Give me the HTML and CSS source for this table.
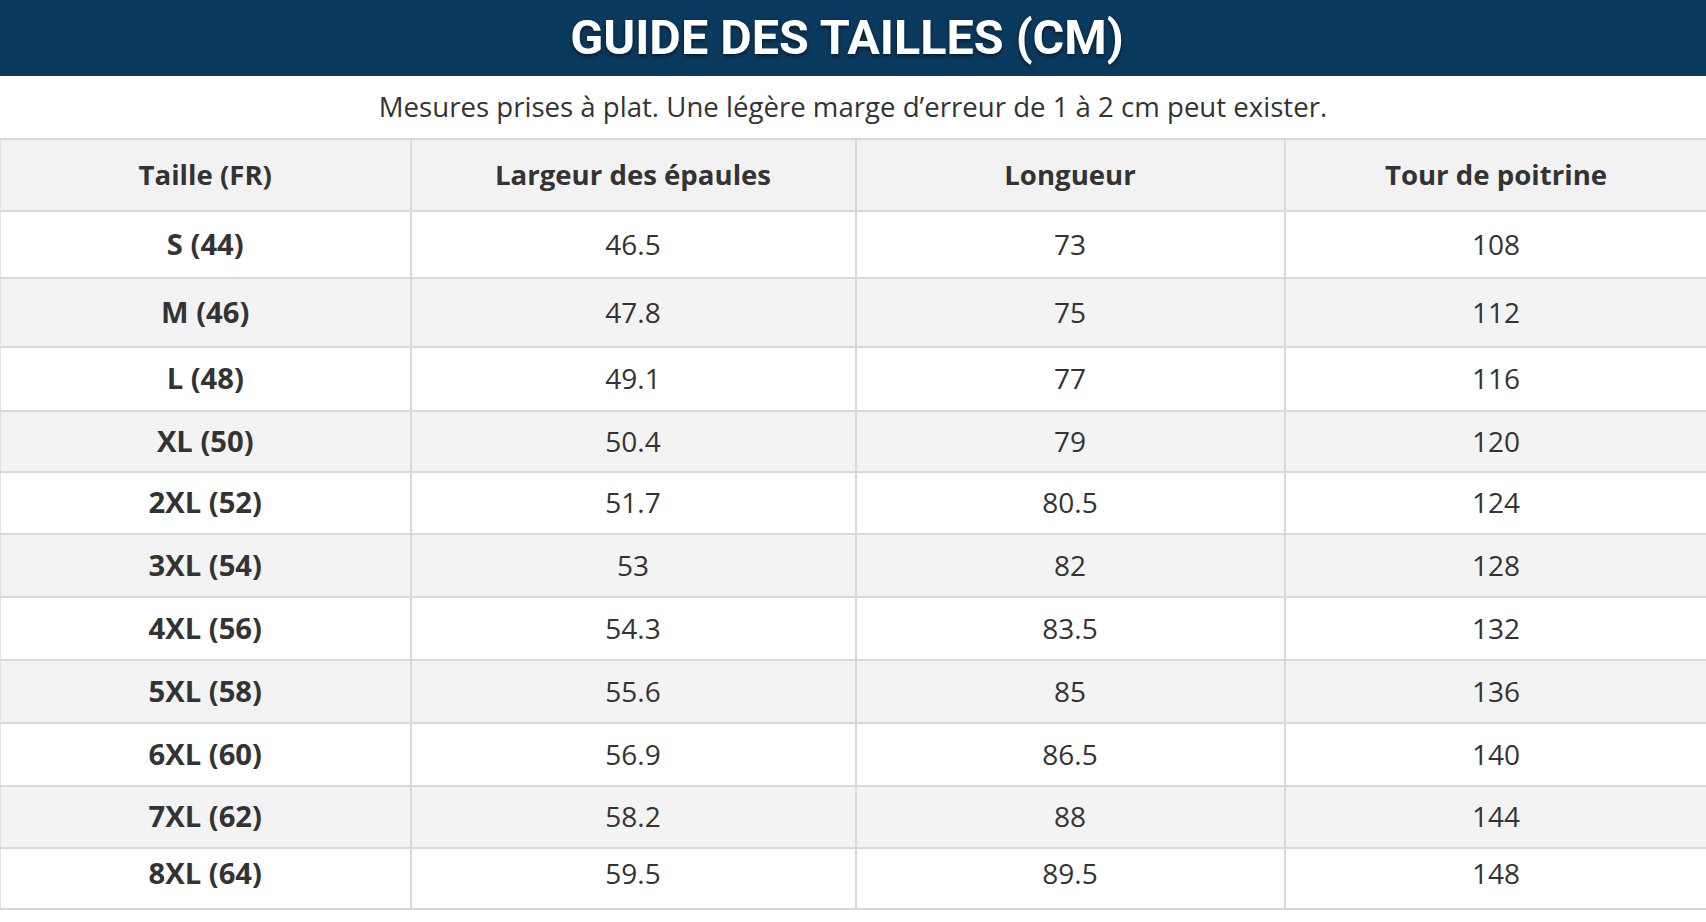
FILE: index.html
```html
<!DOCTYPE html>
<html lang="fr">
<head>
<meta charset="utf-8">
<title>Guide des tailles</title>
<link rel="stylesheet" href="styles.css">
</head>
<body>
<header class="banner"><h1 class="banner-title">GUIDE DES TAILLES (CM)</h1></header>
<p class="note">Mesures prises à plat. Une légère marge d’erreur de 1 à 2 cm peut exister.</p>
<table class="sizes">
  <colgroup>
    <col class="c1"><col class="c2"><col class="c3"><col class="c4">
  </colgroup>
  <thead>
    <tr><th>Taille (FR)</th><th>Largeur des épaules</th><th>Longueur</th><th>Tour de poitrine</th></tr>
  </thead>
  <tbody>
    <tr><th>S (44)</th><td>46.5</td><td>73</td><td>108</td></tr>
    <tr><th>M (46)</th><td>47.8</td><td>75</td><td>112</td></tr>
    <tr><th>L (48)</th><td>49.1</td><td>77</td><td>116</td></tr>
    <tr><th>XL (50)</th><td>50.4</td><td>79</td><td>120</td></tr>
    <tr><th>2XL (52)</th><td>51.7</td><td>80.5</td><td>124</td></tr>
    <tr><th>3XL (54)</th><td>53</td><td>82</td><td>128</td></tr>
    <tr><th>4XL (56)</th><td>54.3</td><td>83.5</td><td>132</td></tr>
    <tr><th>5XL (58)</th><td>55.6</td><td>85</td><td>136</td></tr>
    <tr><th>6XL (60)</th><td>56.9</td><td>86.5</td><td>140</td></tr>
    <tr><th>7XL (62)</th><td>58.2</td><td>88</td><td>144</td></tr>
    <tr class="last"><th>8XL (64)</th><td>59.5</td><td>89.5</td><td>148</td></tr>
  </tbody>
</table>
</body>
</html>
```

FILE: styles.css
```css
html, body {
  margin: 0;
  padding: 0;
  background: #ffffff;
}
body {
  font-family: "Open Sans", "Liberation Sans", sans-serif;
  color: #333333;
}
.banner {
  height: 76px;
  background: #0b3a5f;
  display: flex;
  align-items: center;
  justify-content: center;
  padding-right: 12px;
}
.banner-title {
  margin: 0;
  font-family: Roboto, "Liberation Sans", sans-serif;
  font-weight: 700;
  font-size: 48.5px;
  color: #ffffff;
  letter-spacing: 0;
  text-shadow: 0 2px 4px rgba(0, 0, 0, 0.55);
  line-height: 1;
}
.note {
  margin: 0;
  height: 62px;
  display: flex;
  align-items: center;
  justify-content: center;
  padding-bottom: 2px;
  box-sizing: border-box;
  font-size: 27.6px;
  color: #333333;
}
.sizes {
  width: 100%;
  border-collapse: collapse;
  table-layout: fixed;
}
.c1 { width: 410px; }
.c2 { width: 445px; }
.c3 { width: 429px; }
.c4 { width: 422px; }
.sizes th,
.sizes td {
  border: 2px solid #d9d9d9;
  text-align: center;
  padding: 0 0 2px;
  color: #333333;
}
.sizes thead th {
  font-weight: 700;
  font-size: 27.6px;
}
.sizes tbody th {
  font-weight: 700;
  font-size: 29.2px;
}
.sizes td {
  font-weight: 400;
  font-size: 28px;
}
.sizes tr > :first-child { border-left: 1px solid #e2e2e2; }
.sizes tr > :last-child { border-right: none; }
.sizes thead tr {
  height: 72px;
  background: #f2f2f2;
}
.sizes tbody tr:nth-child(odd) { background: #ffffff; }
.sizes tbody tr:nth-child(even) { background: #f3f3f3; }
.sizes tbody tr:nth-child(1) { height: 67px; }
.sizes tbody tr:nth-child(2) { height: 69px; }
.sizes tbody tr:nth-child(3) { height: 64px; }
.sizes tbody tr:nth-child(4) { height: 61px; }
.sizes tbody tr:nth-child(5) { height: 62px; }
.sizes tbody tr:nth-child(6),
.sizes tbody tr:nth-child(7),
.sizes tbody tr:nth-child(8),
.sizes tbody tr:nth-child(9) { height: 63px; }
.sizes tbody tr:nth-child(10) { height: 62px; }
.sizes tbody tr:nth-child(11) { height: 61px; }
.sizes tr.last > th,
.sizes tr.last > td { padding-bottom: 12px; }
```
